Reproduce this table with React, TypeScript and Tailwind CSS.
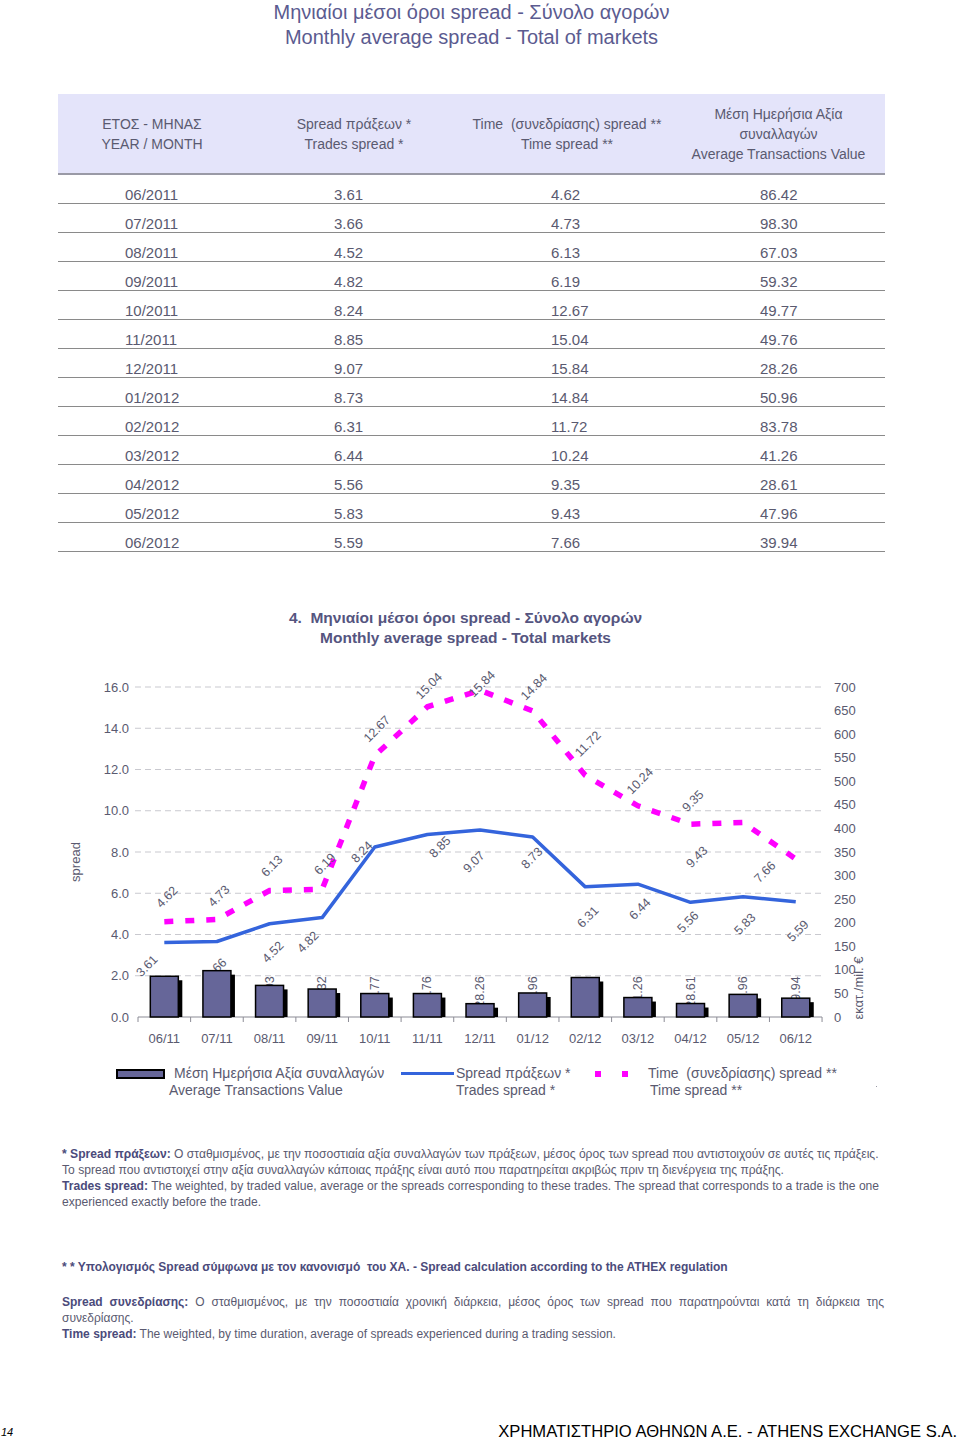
const rows = [
  ['06/2011', '3.61', '4.62', '86.42'],
  ['07/2011', '3.66', '4.73', '98.30'],
  ['08/2011', '4.52', '6.13', '67.03'],
  ['09/2011', '4.82', '6.19', '59.32'],
  ['10/2011', '8.24', '12.67', '49.77'],
  ['11/2011', '8.85', '15.04', '49.76'],
  ['12/2011', '9.07', '15.84', '28.26'],
  ['01/2012', '8.73', '14.84', '50.96'],
  ['02/2012', '6.31', '11.72', '83.78'],
  ['03/2012', '6.44', '10.24', '41.26'],
  ['04/2012', '5.56', '9.35', '28.61'],
  ['05/2012', '5.83', '9.43', '47.96'],
  ['06/2012', '5.59', '7.66', '39.94'],
];

const months = ['06/11', '07/11', '08/11', '09/11', '10/11', '11/11', '12/11', '01/12', '02/12', '03/12', '04/12', '05/12', '06/12'];

// chart geometry (page coordinates)
const X0 = 138;
const STEP = 52.62;
const BASE = 1018;
const cx = (i: number) => X0 + STEP * (i + 0.5);
const yL = (v: number) => BASE - v * 20.625;
const yR = (v: number) => BASE - v * (330 / 700);

// label spots read off the original chart
const blueLabels = [[147, 967], [216, 970], [273, 953], [308, 943], [362, 853], [440, 848], [474, 863], [532, 859], [588, 918], [640, 910], [688, 923], [745, 925], [798, 932]];
const pinkLabels = [[167, 898], [219, 897], [272, 867], [325, 865], [377, 730], [429, 687], [482, 685], [534, 688], [588, 745], [640, 782], [693, 802], [697, 858], [765, 873]];

const TXT = '#5a5a70';

function SpreadChart() {
  const trades = rows.map((r) => parseFloat(r[1]));
  const time = rows.map((r) => parseFloat(r[2]));
  const value = rows.map((r) => parseFloat(r[3]));
  const bluePts = trades.map((v, i) => `${cx(i)},${yL(v)}`).join(' ');
  const pinkPts = time.map((v, i) => `${cx(i)},${yL(v)}`).join(' ');

  return (
    <svg width={960} height={406} viewBox="0 649 960 406" className="block">
      {/* grid */}
      {[16, 14, 12, 10, 8, 6, 4, 2].map((v) => (
        <line key={v} x1={135} x2={823} y1={yL(v)} y2={yL(v)} stroke="#c9c9cf" strokeWidth={1} strokeDasharray="6 4" />
      ))}
      {[16, 14, 12, 10, 8, 6, 4, 2, 0].map((v) => (
        <text key={v} x={129} y={yL(v)} textAnchor="end" dominantBaseline="central" fontSize={13} fill={TXT}>
          {v.toFixed(1)}
        </text>
      ))}
      {Array.from({ length: 15 }, (_, k) => k * 50).map((v) => (
        <text key={v} x={834} y={yR(v)} dominantBaseline="central" fontSize={13} fill={TXT}>
          {v}
        </text>
      ))}
      <text x={75} y={863} textAnchor="middle" dominantBaseline="central" fontSize={13} fill={TXT} transform="rotate(-90 75 863)">
        spread
      </text>
      <text x={858} y={989} textAnchor="middle" dominantBaseline="central" fontSize={13} fill={TXT} transform="rotate(-90 858 989)">
        εκατ./mil. €
      </text>

      {/* x axis */}
      <line x1={X0} x2={X0 + STEP * 13} y1={BASE} y2={BASE} stroke="#8c8c96" strokeWidth={1.2} />
      {Array.from({ length: 14 }, (_, k) => (
        <line key={k} x1={X0 + STEP * k} x2={X0 + STEP * k} y1={BASE} y2={BASE + 5} stroke="#8c8c96" strokeWidth={1} />
      ))}
      {months.map((m, i) => (
        <text key={m} x={cx(i)} y={1039} textAnchor="middle" dominantBaseline="central" fontSize={13} fill={TXT}>
          {m}
        </text>
      ))}

      {/* lines */}
      <polyline points={pinkPts} fill="none" stroke="#ff00ff" strokeWidth={5.5} strokeDasharray="9 12" />
      <polyline points={bluePts} fill="none" stroke="#3464dc" strokeWidth={3.5} strokeLinejoin="round" />

      {/* data labels */}
      {blueLabels.map(([x, y], i) => (
        <text key={'b' + i} x={x} y={y} textAnchor="middle" dominantBaseline="central" fontSize={12.5} fill={TXT} transform={`rotate(-45 ${x} ${y})`}>
          {rows[i][1]}
        </text>
      ))}
      {pinkLabels.map(([x, y], i) => (
        <text key={'p' + i} x={x} y={y} textAnchor="middle" dominantBaseline="central" fontSize={12.5} fill={TXT} transform={`rotate(-45 ${x} ${y})`}>
          {rows[i][2]}
        </text>
      ))}
      {value.map((_, i) => (
        <text key={'v' + i} x={cx(i)} y={993} textAnchor="middle" dominantBaseline="central" fontSize={12.5} fill={TXT} transform={`rotate(-90 ${cx(i)} 993)`}>
          {rows[i][3]}
        </text>
      ))}

      {/* bars sit over their labels */}
      {value.map((v, i) => {
        const top = yR(v);
        const x = cx(i) - 14;
        return (
          <g key={'r' + i}>
            <rect x={x + 4} y={top + 4} width={28} height={BASE - top - 4} fill="#000" />
            <rect x={x} y={top} width={28} height={BASE - top} fill="#666699" stroke="#000" strokeWidth={1.5} />
          </g>
        );
      })}
    </svg>
  );
}

export default function App() {
  return (
    <div className="w-[960px] h-[1440px] bg-white font-['Liberation_Sans',Arial,sans-serif] text-[#5a5a70]">
      {/* page title */}
      <div className="ml-[58px] w-[827px] h-[50px] text-center text-[20px] leading-[25px] text-[#5b5b90]">
        <div>Μηνιαίοι μέσοι όροι spread - Σύνολο αγορών</div>
        <div>Monthly average spread - Total of markets</div>
      </div>

      {/* table */}
      <div className="mt-[44px] ml-[58px] w-[827px]">
        <div className="grid grid-cols-[188px_216px_210px_213px] h-[81px] bg-[#e4e4fa] border-b-2 border-[#9a9aa6] text-[14px] leading-[20px] text-center">
          <div className="flex flex-col justify-center">
            <span>ΕΤΟΣ - ΜΗΝΑΣ</span>
            <span>YEAR / MONTH</span>
          </div>
          <div className="flex flex-col justify-center">
            <span>Spread πράξεων *</span>
            <span>Trades spread *</span>
          </div>
          <div className="flex flex-col justify-center whitespace-pre">
            <span>Time  (συνεδρίασης) spread **</span>
            <span>Time spread **</span>
          </div>
          <div className="flex flex-col justify-center">
            <span>Μέση Ημερήσια Αξία</span>
            <span>συναλλαγών</span>
            <span>Average Transactions Value</span>
          </div>
        </div>
        {rows.map((r) => (
          <div key={r[0]} className="grid grid-cols-[188px_216px_210px_213px] h-[29px] items-end border-b border-[#8a8a8a] text-[15px] leading-[16px] pb-0">
            <div className="pl-[67px]">{r[0]}</div>
            <div className="pl-[88px]">{r[1]}</div>
            <div className="pl-[89px]">{r[2]}</div>
            <div className="pl-[88px]">{r[3]}</div>
          </div>
        ))}
      </div>

      {/* chart title */}
      <div className="mt-[56px] ml-[58px] w-[815px] h-[40px] text-center text-[15.5px] leading-[20px] font-bold text-[#55557f]">
        <div className="whitespace-pre">4.  Μηνιαίοι μέσοι όροι spread - Σύνολο αγορών</div>
        <div>Monthly average spread - Total markets</div>
      </div>

      <SpreadChart />

      {/* legend */}
      <div className="mt-[11px] h-[34px] text-[14px] leading-[17px]">
        <div className="flex">
          <div className="ml-[116px] w-[49px] h-[10px] mt-[4px] bg-[#666699] border-2 border-black" />
          <div className="ml-[9px] w-[227px] whitespace-nowrap">Μέση Ημερήσια Αξία συναλλαγών</div>
          <div className="w-[53px] h-[3px] mt-[7px] bg-[#3464dc]" />
          <div className="ml-[2px] w-[139px]">Spread πράξεων *</div>
          <div className="w-[6px] h-[6px] mt-[6px] bg-[#ff00ff]" />
          <div className="ml-[21px] w-[6px] h-[6px] mt-[6px] bg-[#ff00ff]" />
          <div className="ml-[20px] whitespace-pre">Time  (συνεδρίασης) spread **</div>
        </div>
        <div className="flex">
          <div className="ml-[169px] w-[287px]">Average Transactions Value</div>
          <div className="w-[194px]">Trades spread *</div>
          <div className="w-[226px]">Time spread **</div>
          <div className="mt-[4px] w-[1px] h-[1px] bg-[#9a9aa6]" />
        </div>
      </div>

      {/* footnote 1 */}
      <div className="mt-[47px] ml-[62px] w-[823px] text-[12.1px] leading-[16px]">
        <div>
          <span className="font-bold text-[#4b4b7b]">* Spread πράξεων:</span> Ο σταθμισμένος, με την ποσοστιαία αξία συναλλαγών των πράξεων, μέσος όρος των spread που αντιστοιχούν σε αυτές τις πράξεις.
        </div>
        <div>Το spread που αντιστοιχεί στην αξία συναλλαγών κάποιας πράξης είναι αυτό που παρατηρείται ακριβώς πριν τη διενέργεια της πράξης.</div>
        <div>
          <span className="font-bold text-[#4b4b7b]">Trades spread:</span> The weighted, by traded value, average or the spreads corresponding to these trades. The spread that corresponds to a trade is the one experienced exactly before the trade.
        </div>
      </div>

      {/* footnote 2 */}
      <div className="mt-[49px] ml-[62px] h-[16px] text-[12px] leading-[16px] font-bold text-[#4b4b7b] whitespace-pre">
        * * Υπολογισμός Spread σύμφωνα με τον κανονισμό  του ΧΑ. - Spread calculation according to the ATHEX regulation
      </div>
      <div className="mt-[19px] ml-[62px] w-[822px] h-[48px] text-[12px] leading-[16px]">
        <div className="text-justify [text-align-last:justify]">
          <span className="font-bold text-[#4b4b7b]">Spread συνεδρίασης:</span> Ο σταθμισμένος, με την ποσοστιαία χρονική διάρκεια, μέσος όρος των spread που παρατηρούνται κατά τη διάρκεια της
        </div>
        <div>συνεδρίασης.</div>
        <div>
          <span className="font-bold text-[#4b4b7b]">Time spread:</span> The weighted, by time duration, average of spreads experienced during a trading session.
        </div>
      </div>

      {/* footer */}
      <div className="mt-[80px] h-[20px] flex items-center justify-between text-black">
        <span className="ml-[1px] text-[11px] italic">14</span>
        <span className="mr-[3px] text-[16.6px]">ΧΡΗΜΑΤΙΣΤΗΡΙΟ ΑΘΗΝΩΝ Α.Ε. - ATHENS EXCHANGE S.A.</span>
      </div>
    </div>
  );
}
